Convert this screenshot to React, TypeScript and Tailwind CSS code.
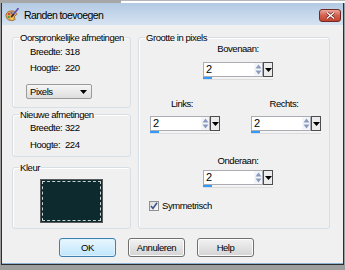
import React from 'react';

const txt = 'text-[9.5px] tracking-[-0.45px] leading-[13px] text-black';

function SpinField({ value }: { value: string }) {
  return (
    <div className="flex w-[70px] flex-col">
      <div className="flex h-[15px]">
        <div className="flex flex-1 border border-[#abadb3] bg-white">
          <div className="flex-1 pl-[2px] text-[11px] leading-[13px] text-black">{value}</div>
          <div className="flex w-[8px] flex-col items-center justify-center gap-[1px] bg-[#f3f5f8]">
            <svg width="7" height="5" viewBox="0 0 7 5">
              <path d="M3.5 0.5 L6.5 4.5 L0.5 4.5 Z" fill="#8a9bbf" />
            </svg>
            <svg width="7" height="5" viewBox="0 0 7 5">
              <path d="M0.5 0.5 L6.5 0.5 L3.5 4.5 Z" fill="#8a9bbf" />
            </svg>
          </div>
        </div>
        <div className="flex w-[10px] items-center justify-center border border-[#4d4d4d] bg-[#ececec]">
          <svg width="7" height="4" viewBox="0 0 7 4">
            <path d="M0 0 L7 0 L3.5 4 Z" fill="#000" />
          </svg>
        </div>
      </div>
      <div className="h-[3px] border-b border-[#dcdcdc] bg-[#f4f4f4]">
        <div className="h-[2px] w-[9px] bg-[#3399ff]" />
      </div>
    </div>
  );
}

function Group({ title, className, children }: { title: string; className?: string; children: React.ReactNode }) {
  return (
    <fieldset className={`rounded-[3px] border border-[#d5dfe5] shadow-[inset_1px_1px_0_#fff] ${className ?? ''}`}>
      <legend className={`ml-[6px] whitespace-nowrap px-[1px] ${txt}`}>{title}</legend>
      {children}
    </fieldset>
  );
}

function Row({ label, value, className }: { label: string; value: string; className?: string }) {
  return (
    <div className={`flex h-[13px] pl-[17px] ${txt} ${className ?? ''}`}>
      <span className="w-[35px] whitespace-nowrap">{label}</span>
      <span>{value}</span>
    </div>
  );
}

function Btn({ label, primary }: { label: string; primary?: boolean }) {
  return (
    <div
      className={`flex h-[19px] w-[57px] items-center justify-center rounded-[3px] border ${txt} ${
        primary
          ? 'border-[#3c7fb1] bg-gradient-to-b from-[#eaf6fd] to-[#bee6fd] shadow-[inset_0_0_0_1px_#dff2fc]'
          : 'border-[#707070] bg-gradient-to-b from-[#f2f2f2] to-[#d4d4d4] shadow-[inset_0_0_0_1px_#fcfcfc]'
      }`}
    >
      {label}
    </div>
  );
}

export default function App() {
  return (
    <div className="flex h-[270px] w-[345px] flex-col overflow-hidden bg-[#9e9e9e] font-['Liberation_Sans',Arial,sans-serif]">
      <div className="flex h-[3px]">
        <div className="w-[121px] bg-[#a7a7a7]" />
        <div className="flex-1 border-t border-[#b5b5b5] bg-white" />
      </div>
      <div className="ml-[1px] flex h-[262px] w-[343px] flex-col border-x border-b border-[#2e2e2e]">
        {/* title bar */}
        <div className="flex h-[22px] items-center bg-gradient-to-b from-[#b3cae3] to-[#d6e3f1] pl-[3px] pr-[1px] pt-[2px]">
          <svg width="14" height="14" viewBox="0 0 14 14">
            <path d="M1 7.5 C1 3.5 6 2 9.5 3.5 C12 4.6 12.5 7 10.5 7.5 C9 7.9 9.5 9.5 10 10.5 C10.5 12 8 13 5.5 12.5 C2.5 12 1 10 1 7.5 Z" fill="#e6a85a" stroke="#8b5a22" strokeWidth="0.8" />
            <circle cx="4" cy="6" r="1.1" fill="#d8262b" />
            <circle cx="6.5" cy="5" r="1.1" fill="#2f6fd6" />
            <circle cx="3.8" cy="9" r="1.1" fill="#2aa43a" />
            <circle cx="6.8" cy="10.5" r="1.1" fill="#f5e23a" />
            <path d="M13 0.8 L7.8 7.2" stroke="#6a4fb0" strokeWidth="1.8" strokeLinecap="round" />
            <path d="M8.3 6.6 L6.6 8.6" stroke="#3b2a12" strokeWidth="1.6" strokeLinecap="round" />
          </svg>
          <span className="ml-[5px] text-[10.5px] leading-[13px] tracking-[-0.6px] text-black">Randen toevoegen</span>
          <div className="ml-auto mr-[1px] flex h-[13px] w-[22px] items-center justify-center rounded-[3px] border border-[#6e2a22] bg-gradient-to-b from-[#eba69c] via-[#d2604f] to-[#c3432f]">
            <svg width="9" height="7" viewBox="0 0 9 7">
              <path d="M1 0.5 L8 6.5 M8 0.5 L1 6.5" stroke="#5a1a12" strokeWidth="2.6" />
              <path d="M1 0.5 L8 6.5 M8 0.5 L1 6.5" stroke="#fff" strokeWidth="1.4" />
            </svg>
          </div>
        </div>

        {/* body */}
        <div className="flex flex-1 flex-col border-b border-[#8db2d3] bg-[#f0f0f0]">
          <div className="flex gap-[7px] pl-[10px] pt-[6px]">
            {/* left column */}
            <div className="flex w-[119px] flex-col">
              <Group title="Oorspronkelijke afmetingen" className="pb-[8px]">
                <Row label="Breedte:" value="318" className="mt-[1px]" />
                <Row label="Hoogte:" value="220" className="mt-[3px]" />
                <div className={`ml-[13px] mt-[10px] flex h-[15px] w-[66px] items-center justify-between rounded-[2px] border border-[#9a9a9a] bg-gradient-to-b from-[#f6f6f6] to-[#dedede] pl-[3px] pr-[4px] ${txt}`}>
                  <span>Pixels</span>
                  <svg width="7" height="4" viewBox="0 0 7 4">
                    <path d="M0 0 L7 0 L3.5 4 Z" fill="#000" />
                  </svg>
                </div>
              </Group>
              <Group title="Nieuwe afmetingen" className="pb-[5px]">
                <Row label="Breedte:" value="322" />
                <Row label="Hoogte:" value="224" className="mt-[4px]" />
              </Group>
              <Group title="Kleur" className="mt-[4px] pb-[5px]">
                <div className="ml-[27px] mt-[5px] h-[44px] w-[63px] border border-[#5a5a5a] bg-[#0d2a2f] p-[1px]">
                  <div className="h-full w-full border border-dashed border-[#c9d2d3]" />
                </div>
              </Group>
            </div>

            {/* right column */}
            <Group title="Grootte in pixels" className="w-[192px] pb-[16px]">
              <div className="ml-[64px] mt-[-2px] flex w-[70px] flex-col items-center">
                <span className={`h-[13px] ${txt}`}>Bovenaan:</span>
                <div className="mt-[7px]">
                  <SpinField value="2" />
                </div>
              </div>
              <div className="mt-[17px] flex gap-[31px] pl-[11px]">
                <div className="flex w-[70px] flex-col items-center">
                  <span className={`h-[13px] pr-[6px] ${txt}`}>Links:</span>
                  <div className="mt-[6px]">
                    <SpinField value="2" />
                  </div>
                </div>
                <div className="flex w-[70px] flex-col items-center">
                  <span className={`h-[13px] pr-[4px] ${txt}`}>Rechts:</span>
                  <div className="mt-[6px]">
                    <SpinField value="2" />
                  </div>
                </div>
              </div>
              <div className="ml-[64px] mt-[20px] flex w-[70px] flex-col items-center">
                <span className={`h-[13px] ${txt}`}>Onderaan:</span>
                <div className="mt-[3px]">
                  <SpinField value="2" />
                </div>
              </div>
              <div className="mt-[11px] flex h-[13px] items-center pl-[10px]">
                <div className="flex h-[10px] w-[10px] items-center justify-center border border-[#8e8f8f] bg-gradient-to-br from-[#dcdcdc] to-[#fbfbfb]">
                  <svg width="8" height="8" viewBox="0 0 8 8">
                    <path d="M1 4 L3 6.5 L7 0.8" fill="none" stroke="#3f558f" strokeWidth="1.6" />
                  </svg>
                </div>
                <span className={`ml-[3px] ${txt}`}>Symmetrisch</span>
              </div>
            </Group>
          </div>

          <div className="mt-[9px] flex gap-[12px] pl-[57px]">
            <Btn label="OK" primary />
            <Btn label="Annuleren" />
            <Btn label="Help" />
          </div>
        </div>
      </div>
    </div>
  );
}
